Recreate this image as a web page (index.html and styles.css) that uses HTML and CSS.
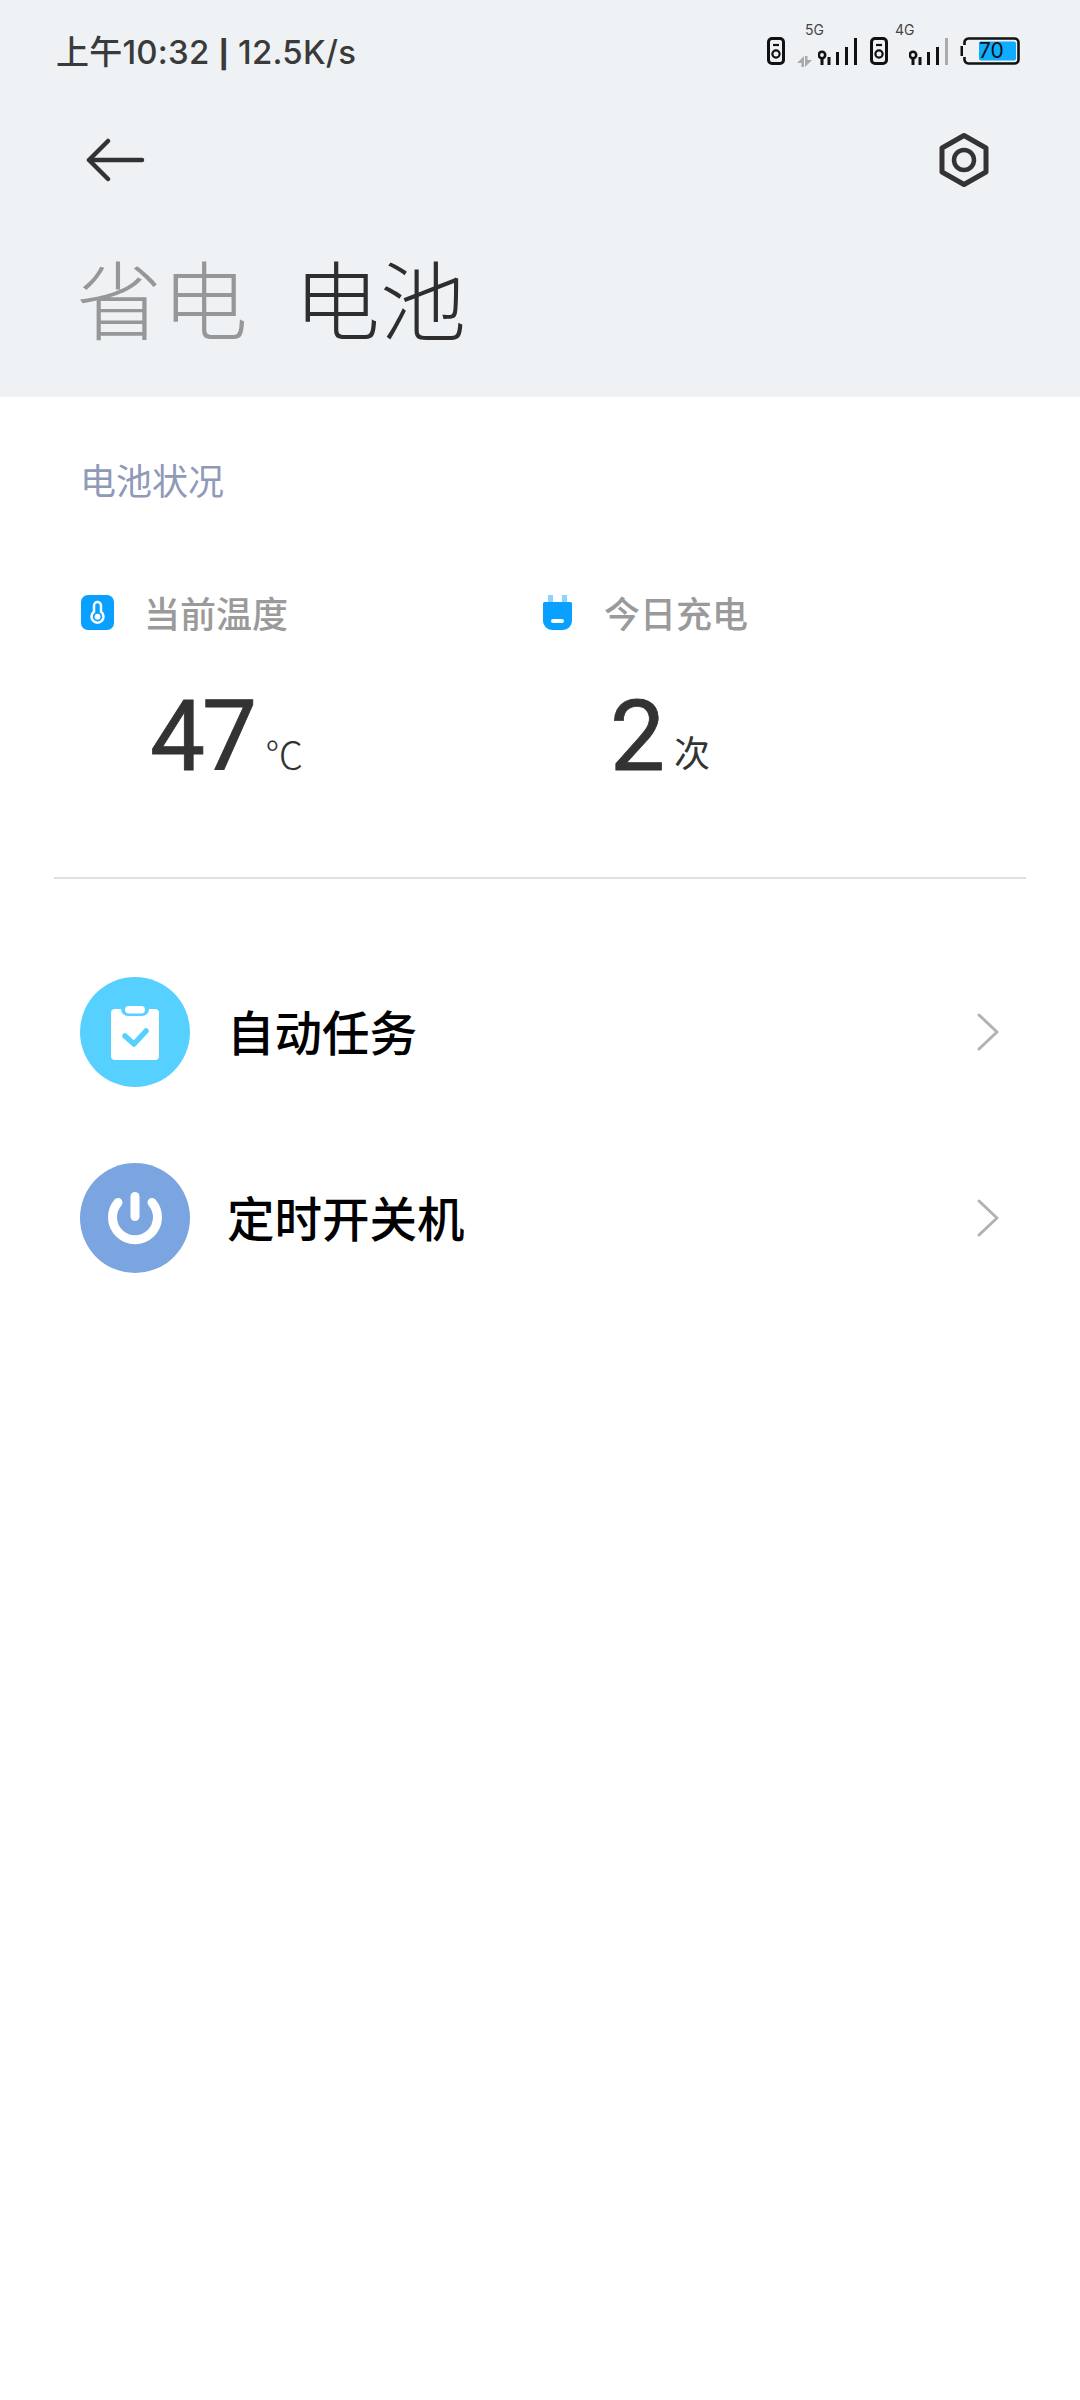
FILE: index.html
```html
<!DOCTYPE html>
<html lang="zh-CN">
<head>
<meta charset="utf-8">
<title>电池</title>
<link rel="stylesheet" href="styles.css">
</head>
<body>
<header class="head">
  <div class="status">
    <span class="status-text">上午10:32 <span class="sep">|</span> 12.5K/s</span>
    <div class="status-icons">
      <svg class="si-vol" viewBox="0 0 18 28"><rect x="1.500" y="1.500" width="15" height="25" rx="3.500" fill="none" stroke="#111" stroke-width="3"/><circle cx="9" cy="17" r="3.600" fill="none" stroke="#111" stroke-width="2.200"/><path d="M6 8h6" stroke="#111" stroke-width="2.200"/></svg>
      <div class="si-signal si-signal-5">
        <span class="si-net si-net-5">5G</span>
        <svg class="si-arrows" viewBox="0 0 15 11"><path d="M0 7L7 0V11H4.500V7zM15 4L8 11V0h2.500v4z" fill="#aaa"/></svg>
        <svg class="si-bars" viewBox="0 0 39 28"><circle cx="4" cy="18" r="3.200" fill="none" stroke="#111" stroke-width="2.600"/><path d="M4 21v7M11 20v8M19.500 15v13M28.500 10v18M37.500 1v27" stroke="#111" stroke-width="3"/></svg>
      </div>
      <svg class="si-vol" viewBox="0 0 18 28"><rect x="1.500" y="1.500" width="15" height="25" rx="3.500" fill="none" stroke="#111" stroke-width="3"/><circle cx="9" cy="17" r="3.600" fill="none" stroke="#111" stroke-width="2.200"/><path d="M6 8h6" stroke="#111" stroke-width="2.200"/></svg>
      <div class="si-signal si-signal-4">
        <span class="si-net si-net-4">4G</span>
        <svg class="si-bars" viewBox="0 0 39 28"><circle cx="4" cy="18" r="3.200" fill="none" stroke="#111" stroke-width="2.600"/><path d="M4 21v7M11 20v8M19.500 15v13M28.500 10v18" stroke="#111" stroke-width="3"/><path d="M37.500 1v27" stroke="#aaa" stroke-width="3"/></svg>
      </div>
      <div class="battery">
        <svg class="battery-shape" viewBox="0 0 60 28"><path d="M4.500 8V6a4 4 0 0 1 4-4.500h46a4 4 0 0 1 4 4v17a4 4 0 0 1-4 4h-46a4 4 0 0 1-4-4.500v-2" fill="none" stroke="#111" stroke-width="2.600"/><rect x="0.500" y="9" width="2.500" height="10" fill="#111"/><rect x="19" y="4.500" width="37" height="19" rx="2" fill="#0fadff"/></svg>
        <span class="battery-num">70</span>
      </div>
    </div>
  </div>
  <div class="toolbar">
    <svg class="back" viewBox="0 0 60 44"><path d="M22 3L3 22l19 19M3 22h53" fill="none" stroke="#333" stroke-width="4.500" stroke-linecap="round" stroke-linejoin="round"/></svg>
    <svg class="gear" viewBox="0 0 52 56"><path d="M26 3.500L48 16v24L26 52.500 4 40V16z" fill="none" stroke="#333" stroke-width="5" stroke-linejoin="round"/><circle cx="26" cy="28" r="10" fill="none" stroke="#333" stroke-width="4.500"/></svg>
  </div>
  <div class="tabs">
    <span class="tab">省电</span>
    <span class="tab tab-on">电池</span>
  </div>
</header>

<main class="content">
  <h2 class="section">电池状况</h2>
  <div class="stats">
    <div class="stat">
      <div class="stat-head">
        <svg class="stat-icon" viewBox="0 0 33 35"><rect width="33" height="35" rx="7" fill="#09a0ff"/><path d="M16.500 7a3.500 3.500 0 0 0-3.500 3.500v6.300a6 6 0 1 0 7 0v-6.300a3.500 3.500 0 0 0-3.500-3.500z" fill="none" stroke="#fff" stroke-width="2.500"/><circle cx="16.500" cy="21.700" r="3" fill="#fff"/></svg>
        <span class="stat-label">当前温度</span>
      </div>
      <div class="stat-value"><span class="num">47</span><span class="unit unit-c">℃</span></div>
    </div>
    <div class="stat stat-right">
      <div class="stat-head">
        <svg class="stat-icon" viewBox="0 0 33 35"><path d="M7 0h5v8H7zM21 0h5v8h-5z" fill="#8ed2ff"/><path d="M2 8.500A1.500 1.500 0 0 1 3.500 7h26A1.500 1.500 0 0 1 31 8.500V26a9 9 0 0 1-9 9H11a9 9 0 0 1-9-9z" fill="#09a0ff"/><rect x="10" y="24" width="13" height="4" rx="2" fill="#fff"/></svg>
        <span class="stat-label">今日充电</span>
      </div>
      <div class="stat-value"><span class="num">2</span><span class="unit">次</span></div>
    </div>
  </div>
  <hr class="rule">
  <ul class="list">
    <li class="row">
      <span class="disc disc-a">
        <svg class="disc-svg" viewBox="0 0 110 110"><path d="M35 32h6a7 7 0 0 0 7 7h14a7 7 0 0 0 7-7h6a4 4 0 0 1 4 4v43a4 4 0 0 1-4 4H35a4 4 0 0 1-4-4V36a4 4 0 0 1 4-4z" fill="#fff"/><rect x="45" y="29" width="20" height="7.500" rx="3.700" fill="#fff"/><path d="M45 59l9 8 12-13" fill="none" stroke="#56d0ff" stroke-width="5.500" stroke-linecap="round" stroke-linejoin="round"/></svg>
      </span>
      <span class="row-title">自动任务</span>
      <svg class="chev" viewBox="0 0 22 38"><path d="M2 2l18 17L2 36" fill="none" stroke="#b2b2b2" stroke-width="3" stroke-linecap="round" stroke-linejoin="round"/></svg>
    </li>
    <li class="row">
      <span class="disc disc-b">
        <svg class="disc-svg" viewBox="0 0 110 110"><path d="M38 39.500a22.500 22.500 0 1 0 34 0" fill="none" stroke="#fff" stroke-width="9" stroke-linecap="round"/><path d="M55 33.500v20" fill="none" stroke="#fff" stroke-width="9" stroke-linecap="round"/></svg>
      </span>
      <span class="row-title">定时开关机</span>
      <svg class="chev" viewBox="0 0 22 38"><path d="M2 2l18 17L2 36" fill="none" stroke="#b2b2b2" stroke-width="3" stroke-linecap="round" stroke-linejoin="round"/></svg>
    </li>
  </ul>
</main>
</body>
</html>
```

FILE: styles.css
```css
* { box-sizing: border-box; }
html, body { margin: 0; padding: 0; }
body {
  width: 1080px;
  height: 2400px;
  background: #fff;
  font-family: "Roboto", "Noto Sans CJK SC", sans-serif;
  overflow: hidden;
}
.head {
  height: 397px;
  background: #eef2f5;
  display: flex;
  flex-direction: column;
}
.status {
  height: 100px;
  padding: 0 60px 0 56px;
  display: flex;
  align-items: center;
  justify-content: space-between;
}
.status-text {
  font-family: "Inter", "Noto Sans CJK SC", sans-serif;
  font-size: 33px;
  color: #3a3a3a;
  font-weight: 500;
  letter-spacing: 0.2px;
}
.sep { font-size: 27px; font-weight: 800; }
.status-icons {
  display: flex;
  align-items: flex-end;
  height: 40px;
  margin-bottom: 11px;
}
.si-vol { width: 18px; height: 28px; flex: none; }
.si-signal {
  position: relative;
  height: 40px;
  flex: none;
}
.si-signal-5 { width: 60px; margin: 0 13px 0 12px; }
.si-signal-4 { width: 53px; margin: 0 12px 0 7px; }
.si-net {
  position: absolute;
  top: -3px;
  font-family: "Inter", sans-serif;
  font-size: 14px;
  color: #444;
  line-height: 16px;
}
.si-net-5 { left: 8px; }
.si-net-4 { left: 0; }
.si-arrows {
  position: absolute;
  left: 0;
  bottom: -2px;
  width: 15px;
  height: 11px;
}
.si-bars {
  position: absolute;
  right: 0;
  bottom: 0;
  width: 39px;
  height: 28px;
}
.battery {
  position: relative;
  width: 60px;
  height: 28px;
  flex: none;
}
.battery-shape { display: block; width: 60px; height: 28px; }
.battery-num {
  position: absolute;
  left: 19px;
  top: 0;
  font-family: "Inter", sans-serif;
  font-size: 21px;
  line-height: 28px;
  color: #111;
}
.toolbar {
  height: 120px;
  padding: 0 90px 0 86px;
  display: flex;
  align-items: center;
  justify-content: space-between;
}
.back { width: 60px; height: 44px; }
.gear { width: 52px; height: 56px; }
.tabs {
  display: flex;
  gap: 46px;
  padding-left: 76px;
  margin-top: 35px;
}
.tab {
  font-size: 86px;
  line-height: 100px;
  font-weight: 300;
  color: #979797;
}
.tab-on { color: #2e2e2e; }
.section {
  margin: 0;
  padding: 65px 0 0 80px;
  font-size: 36px;
  line-height: 42px;
  font-weight: 400;
  color: #8f9ab8;
}
.stats {
  display: flex;
  margin-top: 88px;
  height: 285px;
}
.stat { width: 460px; padding-left: 81px; }
.stat-head {
  display: flex;
  align-items: center;
  height: 40px;
}
.stat-icon { width: 33px; height: 35px; flex: none; }
.stat-label {
  margin-left: 30px;
  font-size: 36px;
  font-weight: 500;
  color: #9a9a9a;
}
.stat-value {
  display: flex;
  align-items: baseline;
  padding-left: 69px;
  margin-top: 50px;
  color: #333;
}
.num { font-size: 98px; line-height: 110px; font-weight: 400; letter-spacing: -3px; -webkit-text-stroke: 0.8px #333; }
.unit { font-size: 36px; margin-left: 12px; font-weight: 400; position: relative; top: -3px; }
.unit-c { font-size: 38px; font-weight: 300; margin-left: 11px; top: -1px; }
.rule {
  border: 0;
  height: 2px;
  background: #e0e0e0;
  margin: 0 54px;
}
.list { list-style: none; margin: 60px 0 0; padding: 0 0 0 80px; }
.row {
  display: flex;
  align-items: center;
  height: 186px;
}
.disc {
  width: 110px;
  height: 110px;
  border-radius: 50%;
  flex: none;
}
.disc-a { background: #56d0ff; }
.disc-b { background: #7ba5e0; }
.disc-svg { display: block; width: 110px; height: 110px; }
.row-title {
  margin-left: 37px;
  padding-bottom: 4px;
  font-size: 47.5px;
  font-weight: 500;
  color: #000;
  flex: 1;
}
.chev { width: 22px; height: 38px; margin-right: 81px; flex: none; }
```
